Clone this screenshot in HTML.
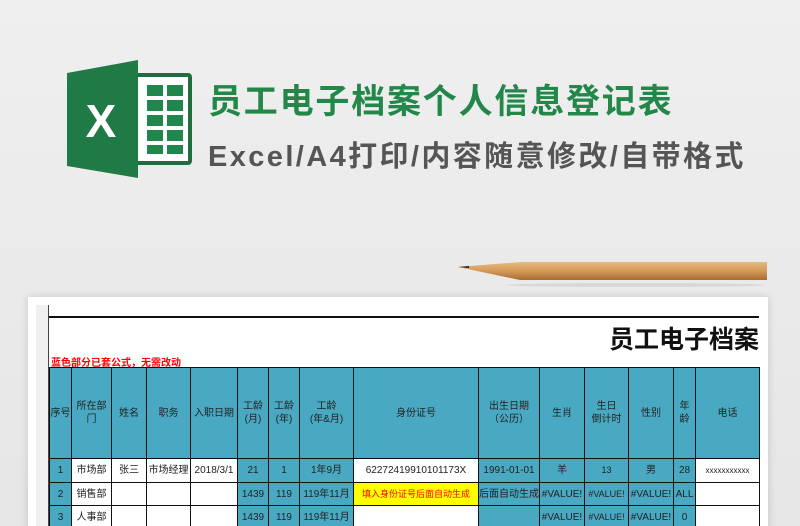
<!DOCTYPE html>
<html><head><meta charset="utf-8"><style>
html,body{margin:0;width:800px;height:526px;overflow:hidden}
body{background:linear-gradient(#efefef,#e6e6e6);font-family:"Liberation Sans","Noto Sans CJK SC",sans-serif;position:relative}
.a{position:absolute}
table{border-collapse:collapse;table-layout:fixed}
td{border:1.5px solid #111;text-align:center;font-size:10px;padding:0;color:#222;white-space:nowrap;overflow:hidden;line-height:13px}
.b{background:#4aa9c2}
</style></head><body>
<svg class="a" style="left:60px;top:55px" width="140" height="130" viewBox="60 55 140 130">
<rect x="130" y="73" width="62" height="92" rx="4" fill="#1e6e3e"/>
<rect x="134" y="77" width="54" height="84" fill="#fff"/>
<g fill="#21864b">
<rect x="147" y="85" width="16" height="11"/><rect x="167" y="85" width="16" height="11"/>
<rect x="147" y="100" width="16" height="11"/><rect x="167" y="100" width="16" height="11"/>
<rect x="147" y="115" width="16" height="11"/><rect x="167" y="115" width="16" height="11"/>
<rect x="147" y="130" width="16" height="11"/><rect x="167" y="130" width="16" height="11"/>
<rect x="147" y="145" width="16" height="9"/><rect x="167" y="145" width="16" height="9"/>
</g>
<path d="M67 73 L138 60 L138 178 L67 166 Z" fill="#1f7a45"/>
<text x="101" y="137" font-family="Liberation Sans" font-weight="bold" font-size="46" fill="#fff" text-anchor="middle">X</text>
</svg>
<div class="a" style="left:208px;top:74px;font-size:34px;font-weight:bold;color:#23874a;letter-spacing:1.8px">员工电子档案个人信息登记表</div>
<div class="a" style="left:208px;top:133px;font-size:29px;font-weight:bold;color:#555;letter-spacing:2.4px">Excel/A4打印/内容随意修改/自带格式</div>
<svg class="a" style="left:455px;top:258px" width="315" height="30">
<defs><linearGradient id="p" x1="0" y1="0" x2="0" y2="1"><stop offset="0" stop-color="#e8b97e"/><stop offset=".5" stop-color="#d39a57"/><stop offset="1" stop-color="#a86c34"/></linearGradient></defs>
<path d="M3 9 L65 4 L312 4 L312 22 L65 22 Z" fill="url(#p)"/>
<path d="M3 9 L14 8 L14 10 Z" fill="#222"/>
<ellipse cx="180" cy="27" rx="130" ry="2" fill="#d8d8d8"/>
</svg>
<div class="a" style="left:28px;top:297px;width:740px;height:240px;background:#fff;box-shadow:0 0 8px rgba(0,0,0,.15)"></div>
<div class="a" style="left:36px;top:305px;width:12px;height:230px;background:#f0f0f0;border-right:1px solid #444"></div>
<div class="a" style="left:49px;top:316px;width:710px;height:1.5px;background:#111"></div>
<div class="a" style="left:560px;top:320px;width:199px;overflow:hidden;text-align:right;white-space:nowrap;font-size:25px;font-weight:bold;color:#111">员工电子档案</div>
<div class="a" style="left:51px;top:354px;font-size:10px;color:#f00;font-weight:bold">蓝色部分已套公式，无需改动</div>
<table class="a" style="left:49px;top:367px;width:710px">
<colgroup><col style="width:22px"><col style="width:40px"><col style="width:35px"><col style="width:44px"><col style="width:47px"><col style="width:31px"><col style="width:31px"><col style="width:54px"><col style="width:125px"><col style="width:61px"><col style="width:45px"><col style="width:44px"><col style="width:45px"><col style="width:22px"><col style="width:64px"></colgroup>
<tr style="height:91px" class="b"><td>序号</td><td>所在部<br>门</td><td>姓名</td><td>职务</td><td>入职日期</td><td>工龄<br>(月)</td><td>工龄<br>(年)</td><td>工龄<br>(年&amp;月)</td><td>身份证号</td><td>出生日期<br>（公历）</td><td>生肖</td><td>生日<br>倒计时</td><td>性别</td><td>年<br>龄</td><td>电话</td></tr>
<tr style="height:24px"><td class="b">1</td><td>市场部</td><td>张三</td><td>市场经理</td><td>2018/3/1</td><td class="b">21</td><td class="b">1</td><td class="b">1年9月</td><td>62272419910101173X</td><td class="b">1991-01-01</td><td class="b">羊</td><td class="b" style="font-size:9px">13</td><td class="b">男</td><td class="b">28</td><td style="font-size:8px">xxxxxxxxxxx</td></tr>
<tr style="height:23px"><td class="b">2</td><td>销售部</td><td></td><td></td><td></td><td class="b">1439</td><td class="b">119</td><td class="b">119年11月</td><td style="background:#ff0;color:#f00;font-size:9px">填入身份证号后面自动生成</td><td class="b">后面自动生成</td><td class="b">#VALUE!</td><td class="b" style="font-size:9px">#VALUE!</td><td class="b">#VALUE!</td><td class="b">ALL</td><td></td></tr>
<tr style="height:23px"><td class="b">3</td><td>人事部</td><td></td><td></td><td></td><td class="b">1439</td><td class="b">119</td><td class="b">119年11月</td><td></td><td class="b"></td><td class="b">#VALUE!</td><td class="b" style="font-size:9px">#VALUE!</td><td class="b">#VALUE!</td><td class="b">0</td><td></td></tr>
</table>
</body></html>
